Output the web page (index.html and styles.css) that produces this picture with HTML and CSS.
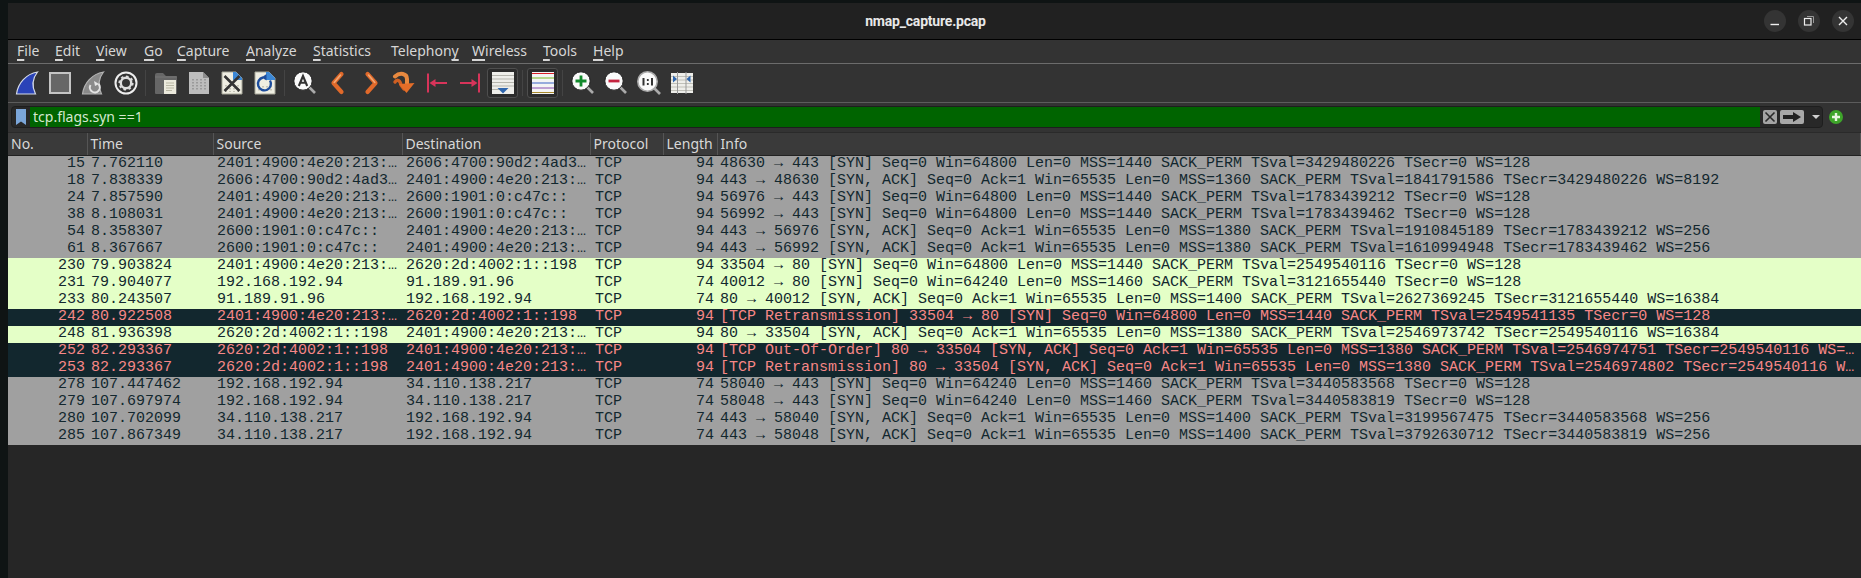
FILE: index.html
```html
<!DOCTYPE html>
<html lang="en">
<head>
    <meta charset="UTF-8">
    <meta name="viewport" content="width=device-width, initial-scale=1.0">
    <title>nmap_capture.pcap</title>
    <link rel="stylesheet" href="styles.css">
</head>
<body>
<div class="window">
    <header class="titlebar">
        <span class="title">nmap_capture.pcap</span>
        <div class="winbtns">
            <span class="winbtn"><svg width="12" height="12" viewBox="0 0 12 12"><path d="M1.5 9.5h8.5" stroke="#eee" stroke-width="1.4"/></svg></span>
            <span class="winbtn"><svg width="12" height="12" viewBox="0 0 12 12"><rect x="1.5" y="3.5" width="6.5" height="6.5" fill="none" stroke="#eee" stroke-width="1.2"/><path d="M4 1.5h6.5v6.5" fill="none" stroke="#999"/></svg></span>
            <span class="winbtn"><svg width="12" height="12" viewBox="0 0 12 12"><path d="M2 2l8 8M10 2l-8 8" stroke="#eee" stroke-width="1.4"/></svg></span>
        </div>
    </header>

    <nav class="menubar">
        <span><u>F</u>ile</span>
        <span><u>E</u>dit</span>
        <span><u>V</u>iew</span>
        <span><u>G</u>o</span>
        <span><u>C</u>apture</span>
        <span><u>A</u>nalyze</span>
        <span><u>S</u>tatistics</span>
        <span>Telephon<u>y</u></span>
        <span><u>W</u>ireless</span>
        <span><u>T</u>ools</span>
        <span><u>H</u>elp</span>
    </nav>

    <div class="toolbar">
        <!-- capture -->
        <span class="tb"><svg width="24" height="24" viewBox="0 0 24 24"><path d="M1.5 23C3 12 11 3 22.500 1C17 8 17 16 20.500 23Z" fill="#2a43b8" stroke="#d6dce8" stroke-width="1.200"/></svg></span>
        <span class="tb"><svg width="24" height="24" viewBox="0 0 24 24"><rect x="2" y="2" width="20" height="20" fill="#666" stroke="#c4c4c4" stroke-width="2"/></svg></span>
        <span class="tb"><svg width="24" height="24" viewBox="0 0 24 24"><path d="M1.500 23C3 12 11 3 22.500 1C17 8 17 16 20.500 23Z" fill="#8a8a8a" stroke="#b4b4b4" stroke-width="1.200"/><path d="M9.500 14a5 5 0 1 0 8 -1" fill="none" stroke="#e4e4e4" stroke-width="2"/><path d="M13 10l5 3-4 2z" fill="#e4e4e4"/></svg></span>
        <span class="tb"><svg width="24" height="24" viewBox="0 0 24 24"><circle cx="12" cy="12" r="10.500" fill="#333" stroke="#eee" stroke-width="2"/><circle cx="12" cy="12" r="5.200" fill="none" stroke="#ddd" stroke-width="2.400"/><circle cx="12" cy="12" r="6.800" fill="none" stroke="#ddd" stroke-width="1.600" stroke-dasharray="2.600 2.700"/></svg></span>
        <i class="sep"></i>
        <!-- file -->
        <span class="tb"><svg width="24" height="24" viewBox="0 0 24 24"><path d="M1 4q0-2 2-2h6l3 3h10q1 0 1 2v15q0 1-1 1H2q-1 0-1-1z" fill="#666"/><path d="M1 6h22" stroke="#777"/><path d="M10 9h12v14H10z" fill="#ebe9dc"/><path d="M12 12h8M12 14.500h8M12 17h8M12 19.500h6" stroke="#b9b7a4"/></svg></span>
        <span class="tb"><svg width="24" height="24" viewBox="0 0 24 24"><path d="M2 1h14l6 6v16H2z" fill="#bdbdbd"/><path d="M16 1l6 6h-6z" fill="#8d8d8d"/><path d="M6 8v12M10 8v12M14 8v12M18 8v12" stroke="#8f8f8f" stroke-width="1.500" stroke-dasharray="1.500 1.500"/></svg></span>
        <span class="tb"><svg width="24" height="24" viewBox="0 0 24 24"><path d="M2 1h14l6 6v16H2z" fill="#efeee2" stroke="#a9a99b"/><path d="M13 1h3l6 6v2h-9z" fill="#3b87d6"/><path d="M6 14v7M10 14v7M14 14v7M18 14v7" stroke="#9a9a8c" stroke-dasharray="1.500 1.500"/><path d="M4.500 5l15 15M19.500 5l-15 15" stroke="#333" stroke-width="2.600"/></svg></span>
        <span class="tb"><svg width="24" height="24" viewBox="0 0 24 24"><path d="M2 1h14l6 6v16H2z" fill="#efeee2" stroke="#a9a99b"/><path d="M13 1h3l6 6v2h-9z" fill="#3b87d6"/><path d="M6 15v6M10 15v6M14 15v6M18 15v6" stroke="#9a9a8c" stroke-dasharray="1.500 1.500"/><path d="M10 6.500a6.500 6.500 0 1 0 7 3" fill="none" stroke="#1d4d9c" stroke-width="2.400"/><path d="M13.500 3l-5 3.500 5 3z" fill="#1d4d9c"/></svg></span>
        <i class="sep"></i>
        <!-- find and go -->
        <span class="tb"><svg width="24" height="24" viewBox="0 0 24 24"><path d="M16 16l6 6" stroke="#aaa" stroke-width="2.600"/><circle cx="10" cy="10" r="9.200" fill="#fafafa" stroke="#222" stroke-width="1"/><path d="M5.800 15L10 5l4.200 10M7.300 11.800h5.400" fill="none" stroke="#333" stroke-width="2.100"/></svg></span>
        <span class="tb"><svg width="24" height="24" viewBox="0 0 24 24"><path d="M15.500 3L7.500 12l8 9" fill="none" stroke="#e0692a" stroke-width="4.200" stroke-linejoin="round" stroke-linecap="round"/><path d="M14.500 4L8.200 11.500" fill="none" stroke="#f3a874" stroke-width="1.600" stroke-linecap="round"/></svg></span>
        <span class="tb"><svg width="24" height="24" viewBox="0 0 24 24"><path d="M8.500 3l8 9-8 9" fill="none" stroke="#e0692a" stroke-width="4.200" stroke-linejoin="round" stroke-linecap="round"/><path d="M9.500 4l6.300 7.500" fill="none" stroke="#f3a874" stroke-width="1.600" stroke-linecap="round"/></svg></span>
        <span class="tb"><svg width="24" height="24" viewBox="0 0 24 24"><path d="M3 5.500C8 1 15 2.500 15 8v6" fill="none" stroke="#e8893f" stroke-width="4" stroke-linecap="round"/><path d="M3 11c2-3 5-2 6 3l3 4" fill="none" stroke="#cf5f22" stroke-width="3.400" stroke-linecap="round"/><path d="M7 13l7.500 9 8-10z" fill="#e36d28"/></svg></span>
        <span class="tb"><svg width="24" height="24" viewBox="0 0 24 24"><path d="M3 2.500v19M22 12H6" stroke="#d8345a" stroke-width="2"/><path d="M4.500 12l6-4v8z" fill="#d8345a"/></svg></span>
        <span class="tb"><svg width="24" height="24" viewBox="0 0 24 24"><path d="M21 2.500v19M2 12h16" stroke="#d8345a" stroke-width="2"/><path d="M19.500 12l-6-4v8z" fill="#d8345a"/></svg></span>
        <span class="tb on"><svg width="24" height="24" viewBox="0 0 24 24"><rect x="1" y="1" width="22" height="22" fill="#eeeeea"/><path d="M1 4.500h22M1 8h22M1 11.500h22M1 15h22M1 18.500h14" stroke="#b5b5ad"/><path d="M6.500 17h11L12 22.500z" fill="#2f66ad"/></svg></span>
        <i class="sep"></i>
        <span class="tb on"><svg width="24" height="24" viewBox="0 0 24 24"><rect x="1" y="1" width="22" height="22" fill="#f4f4f4"/><path d="M1 2.500h22" stroke="#d81f26"/><path d="M1 7h22" stroke="#78b823"/><path d="M1 12h22" stroke="#3a63c4"/><path d="M1 17h22" stroke="#8a4fb0"/><path d="M1 21.500h22" stroke="#a88a2c"/></svg></span>
        <i class="sep"></i>
        <!-- zoom -->
        <span class="tb"><svg width="24" height="24" viewBox="0 0 24 24"><path d="M16 16l6 6" stroke="#aaa" stroke-width="2.600"/><circle cx="10" cy="10" r="9.200" fill="#fafafa" stroke="#222"/><path d="M4.500 10h11M10 4.500v11" stroke="#128a2c" stroke-width="2.800"/></svg></span>
        <span class="tb"><svg width="24" height="24" viewBox="0 0 24 24"><path d="M16 16l6 6" stroke="#aaa" stroke-width="2.600"/><circle cx="10" cy="10" r="9.200" fill="#fafafa" stroke="#222"/><path d="M4.500 10h11" stroke="#c4233f" stroke-width="2.800"/></svg></span>
        <span class="tb"><svg width="24" height="24" viewBox="0 0 24 24"><path d="M17 17l6 6" stroke="#aaa" stroke-width="2.600"/><circle cx="10.500" cy="10.500" r="9.700" fill="#fafafa" stroke="#aaa" stroke-width="1.600"/><path d="M6.500 7v7.500M15 7v7.500" stroke="#333" stroke-width="2"/><path d="M10.800 8v2M10.800 12v2" stroke="#333" stroke-width="1.800"/></svg></span>
        <span class="tb"><svg width="24" height="24" viewBox="0 0 24 24"><rect x="1" y="2" width="22" height="20" fill="#eeeeea"/><path d="M1 5.500h22M1 9h22M1 12.500h22M1 16h22M1 19.500h22" stroke="#c0c0b8"/><path d="M7.500 1v22M16 1v22" stroke="#999"/><path d="M3 4.500l4 3.500-4 3.500zM20.500 4.500l-4 3.500 4 3.500z" fill="#2f66ad"/></svg></span>
    </div>

    <div class="filterbar">
        <div class="filterbox">
            <span class="bookmark"><svg width="10" height="16" viewBox="0 0 10 16"><path d="M0 0h10v16L5 12.500 0 16z" fill="#7ba6d9"/></svg></span>
            <input class="filter" type="text" value="tcp.flags.syn ==1">
            <span class="clear"><svg width="14" height="14" viewBox="0 0 14 14"><path d="M2.500 2.500l9 9M11.500 2.500l-9 9" stroke="#2a2a2a" stroke-width="1.600"/></svg></span>
            <span class="apply"><svg width="18" height="10" viewBox="0 0 18 10"><path d="M0 3h10V0l8 5-8 5V7H0z" fill="#222"/></svg></span>
            <span class="drop"></span>
        </div>
        <span class="plus"><svg width="14" height="14" viewBox="0 0 14 14"><circle cx="7" cy="7" r="7" fill="#3ea52a"/><path d="M3 7h8M7 3v8" stroke="#e8f5e0" stroke-width="2.400"/></svg></span>
    </div>

    <table class="packets">
        <colgroup>
            <col class="c-no"><col class="c-time"><col class="c-addr"><col class="c-addr2"><col class="c-proto"><col class="c-len"><col>
        </colgroup>
        <thead>
            <tr><th>No.</th><th>Time</th><th>Source</th><th>Destination</th><th>Protocol</th><th>Length</th><th>Info</th></tr>
        </thead>
        <tbody>
            <tr class="syn"><td>15</td><td>7.762110</td><td>2401:4900:4e20:213:…</td><td>2606:4700:90d2:4ad3…</td><td>TCP</td><td>94</td><td>48630 → 443 [SYN] Seq=0 Win=64800 Len=0 MSS=1440 SACK_PERM TSval=3429480226 TSecr=0 WS=128</td></tr>
            <tr class="syn"><td>18</td><td>7.838339</td><td>2606:4700:90d2:4ad3…</td><td>2401:4900:4e20:213:…</td><td>TCP</td><td>94</td><td>443 → 48630 [SYN, ACK] Seq=0 Ack=1 Win=65535 Len=0 MSS=1360 SACK_PERM TSval=1841791586 TSecr=3429480226 WS=8192</td></tr>
            <tr class="syn"><td>24</td><td>7.857590</td><td>2401:4900:4e20:213:…</td><td>2600:1901:0:c47c::</td><td>TCP</td><td>94</td><td>56976 → 443 [SYN] Seq=0 Win=64800 Len=0 MSS=1440 SACK_PERM TSval=1783439212 TSecr=0 WS=128</td></tr>
            <tr class="syn"><td>38</td><td>8.108031</td><td>2401:4900:4e20:213:…</td><td>2600:1901:0:c47c::</td><td>TCP</td><td>94</td><td>56992 → 443 [SYN] Seq=0 Win=64800 Len=0 MSS=1440 SACK_PERM TSval=1783439462 TSecr=0 WS=128</td></tr>
            <tr class="syn"><td>54</td><td>8.358307</td><td>2600:1901:0:c47c::</td><td>2401:4900:4e20:213:…</td><td>TCP</td><td>94</td><td>443 → 56976 [SYN, ACK] Seq=0 Ack=1 Win=65535 Len=0 MSS=1380 SACK_PERM TSval=1910845189 TSecr=1783439212 WS=256</td></tr>
            <tr class="syn"><td>61</td><td>8.367667</td><td>2600:1901:0:c47c::</td><td>2401:4900:4e20:213:…</td><td>TCP</td><td>94</td><td>443 → 56992 [SYN, ACK] Seq=0 Ack=1 Win=65535 Len=0 MSS=1380 SACK_PERM TSval=1610994948 TSecr=1783439462 WS=256</td></tr>
            <tr class="http"><td>230</td><td>79.903824</td><td>2401:4900:4e20:213:…</td><td>2620:2d:4002:1::198</td><td>TCP</td><td>94</td><td>33504 → 80 [SYN] Seq=0 Win=64800 Len=0 MSS=1440 SACK_PERM TSval=2549540116 TSecr=0 WS=128</td></tr>
            <tr class="http"><td>231</td><td>79.904077</td><td>192.168.192.94</td><td>91.189.91.96</td><td>TCP</td><td>74</td><td>40012 → 80 [SYN] Seq=0 Win=64240 Len=0 MSS=1460 SACK_PERM TSval=3121655440 TSecr=0 WS=128</td></tr>
            <tr class="http"><td>233</td><td>80.243507</td><td>91.189.91.96</td><td>192.168.192.94</td><td>TCP</td><td>74</td><td>80 → 40012 [SYN, ACK] Seq=0 Ack=1 Win=65535 Len=0 MSS=1400 SACK_PERM TSval=2627369245 TSecr=3121655440 WS=16384</td></tr>
            <tr class="bad"><td>242</td><td>80.922508</td><td>2401:4900:4e20:213:…</td><td>2620:2d:4002:1::198</td><td>TCP</td><td>94</td><td>[TCP Retransmission] 33504 → 80 [SYN] Seq=0 Win=64800 Len=0 MSS=1440 SACK_PERM TSval=2549541135 TSecr=0 WS=128</td></tr>
            <tr class="http"><td>248</td><td>81.936398</td><td>2620:2d:4002:1::198</td><td>2401:4900:4e20:213:…</td><td>TCP</td><td>94</td><td>80 → 33504 [SYN, ACK] Seq=0 Ack=1 Win=65535 Len=0 MSS=1380 SACK_PERM TSval=2546973742 TSecr=2549540116 WS=16384</td></tr>
            <tr class="bad"><td>252</td><td>82.293367</td><td>2620:2d:4002:1::198</td><td>2401:4900:4e20:213:…</td><td>TCP</td><td>94</td><td>[TCP Out-Of-Order] 80 → 33504 [SYN, ACK] Seq=0 Ack=1 Win=65535 Len=0 MSS=1380 SACK_PERM TSval=2546974751 TSecr=2549540116 WS=…</td></tr>
            <tr class="bad"><td>253</td><td>82.293367</td><td>2620:2d:4002:1::198</td><td>2401:4900:4e20:213:…</td><td>TCP</td><td>94</td><td>[TCP Retransmission] 80 → 33504 [SYN, ACK] Seq=0 Ack=1 Win=65535 Len=0 MSS=1380 SACK_PERM TSval=2546974802 TSecr=2549540116 W…</td></tr>
            <tr class="syn"><td>278</td><td>107.447462</td><td>192.168.192.94</td><td>34.110.138.217</td><td>TCP</td><td>74</td><td>58040 → 443 [SYN] Seq=0 Win=64240 Len=0 MSS=1460 SACK_PERM TSval=3440583568 TSecr=0 WS=128</td></tr>
            <tr class="syn"><td>279</td><td>107.697974</td><td>192.168.192.94</td><td>34.110.138.217</td><td>TCP</td><td>74</td><td>58048 → 443 [SYN] Seq=0 Win=64240 Len=0 MSS=1460 SACK_PERM TSval=3440583819 TSecr=0 WS=128</td></tr>
            <tr class="syn"><td>280</td><td>107.702099</td><td>34.110.138.217</td><td>192.168.192.94</td><td>TCP</td><td>74</td><td>443 → 58040 [SYN, ACK] Seq=0 Ack=1 Win=65535 Len=0 MSS=1400 SACK_PERM TSval=3199567475 TSecr=3440583568 WS=256</td></tr>
            <tr class="syn"><td>285</td><td>107.867349</td><td>34.110.138.217</td><td>192.168.192.94</td><td>TCP</td><td>74</td><td>443 → 58048 [SYN, ACK] Seq=0 Ack=1 Win=65535 Len=0 MSS=1400 SACK_PERM TSval=3792630712 TSecr=3440583819 WS=256</td></tr>
        </tbody>
    </table>
</div>
</body>
</html>
```

FILE: styles.css
```css
html, body {
    height: 100%;
}
body {
    margin: 0;
    padding: 3px 0 0 8px;
    box-sizing: border-box;
    background-color: #0f1414;
    overflow: hidden;
    font-family: "Noto Sans", sans-serif;
}
.window {
    height: 100%;
    background-color: #262626;
    display: flex;
    flex-direction: column;
}

/* title bar */
.titlebar {
    height: 36px;
    flex: none;
    position: relative;
    display: flex;
    align-items: center;
    justify-content: center;
    background-color: #212121;
    border-bottom: 1px solid #000;
}
.title {
    color: #e8e8e8;
    font-family: Roboto, sans-serif;
    font-size: 14px;
    font-weight: 700;
    letter-spacing: -0.2px;
    padding-right: 18px;
}
.winbtns {
    position: absolute;
    right: 7px;
    top: 7px;
    display: flex;
    gap: 12px;
}
.winbtn {
    width: 22px;
    height: 22px;
    border-radius: 50%;
    background-color: #343434;
    display: flex;
    align-items: center;
    justify-content: center;
}

/* menu */
.menubar {
    height: 21px;
    flex: none;
    display: flex;
    align-items: center;
    padding: 0 0 2px 9px;
    background-color: #333;
    border-bottom: 1px solid #6c6c6c;
    color: #d6d6d6;
    font-size: 14px;
}
.menubar u {
    text-decoration-thickness: 2px;
    text-underline-offset: 3px;
}
.menubar span:nth-child(1) { width: 38px; }
.menubar span:nth-child(2) { width: 41px; }
.menubar span:nth-child(3) { width: 48px; }
.menubar span:nth-child(4) { width: 33px; }
.menubar span:nth-child(5) { width: 69px; }
.menubar span:nth-child(6) { width: 67px; }
.menubar span:nth-child(7) { width: 78px; }
.menubar span:nth-child(8) { width: 81px; }
.menubar span:nth-child(9) { width: 71px; }
.menubar span:nth-child(10) { width: 50px; }

/* toolbar */
.toolbar {
    height: 38px;
    flex: none;
    display: flex;
    align-items: center;
    padding-left: 2px;
    background-color: #333;
    border-bottom: 1px solid #5c5c5c;
}
.tb {
    width: 33px;
    height: 30px;
    flex: none;
    box-sizing: border-box;
    display: flex;
    align-items: center;
    justify-content: center;
}
.tb.on {
    width: 31px;
    margin: 0 1px;
    border: 1px solid #4e4e4e;
    border-radius: 3px;
    background-color: #2b2b2b;
}
.sep {
    width: 7px;
    height: 26px;
    flex: none;
    background: linear-gradient(#444, #444) center / 1px 100% no-repeat;
}

/* display filter */
.filterbar {
    height: 30px;
    flex: none;
    display: flex;
    align-items: center;
    padding: 0 0 1px 3px;
    box-sizing: border-box;
    background-color: #333;
    border-bottom: 1px solid #2a2a2a;
}
.filterbox {
    width: 1812px;
    height: 22px;
    display: flex;
    align-items: center;
    box-sizing: border-box;
    border: 1px solid #1e1e1e;
    border-radius: 4px;
    background-color: #282828;
}
.bookmark {
    width: 18px;
    flex: none;
    display: flex;
    justify-content: center;
}
.filter {
    width: 1730px;
    height: 20px;
    flex: none;
    box-sizing: border-box;
    border: 0;
    outline: 0;
    padding: 0 0 2px 3px;
    background-color: #006400;
    color: #d5e8d0;
    font-family: "Noto Sans", sans-serif;
    font-size: 14px;
}
.clear {
    width: 14px;
    height: 14px;
    flex: none;
    margin-left: 3px;
    border-radius: 2px;
    background-color: #a4a4a4;
}
.clear svg {
    display: block;
}
.apply {
    width: 24px;
    height: 14px;
    flex: none;
    margin-left: 3px;
    border-radius: 2px;
    background-color: #a8a8a8;
    display: flex;
    align-items: center;
    justify-content: center;
}
.drop {
    flex: none;
    margin-left: 8px;
    border-top: 4px solid #d0d0d0;
    border-left: 4px solid transparent;
    border-right: 4px solid transparent;
}
.plus {
    margin-left: 6px;
    height: 14px;
}
.plus svg {
    display: block;
}

/* packet list */
.packets {
    width: 1853px;
    flex: none;
    table-layout: fixed;
    border-collapse: collapse;
}
.c-no { width: 79px; }
.c-time { width: 126px; }
.c-addr { width: 189px; }
.c-addr2 { width: 188px; }
.c-proto { width: 73px; }
.c-len { width: 54px; }
.packets th {
    height: 22px;
    padding: 0 0 0 3px;
    box-sizing: border-box;
    background-color: #3a3a3a;
    border-right: 1px solid #555;
    border-bottom: 1px solid #222;
    color: #d8d8d8;
    font-size: 14px;
    font-weight: 400;
    text-align: left;
    white-space: nowrap;
    overflow: hidden;
}
.packets td {
    height: 16px;
    padding: 0 0 1px 4px;
    font-family: "Liberation Mono", monospace;
    font-size: 15px;
    line-height: 16px;
    white-space: nowrap;
    overflow: hidden;
}
.packets td:nth-child(1) {
    padding: 0 2px 1px 0;
    text-align: right;
}
.packets td:nth-child(5) {
    padding-left: 5px;
}
.packets td:nth-child(6) {
    padding: 0 3px 1px 0;
    text-align: right;
}
.packets td:nth-child(7) {
    padding-left: 3px;
}
.syn {
    background-color: #a0a0a0;
    color: #12272e;
}
.http {
    background-color: #e4ffc7;
    color: #12272e;
}
.bad {
    background-color: #12272e;
    color: #f78787;
}
```
